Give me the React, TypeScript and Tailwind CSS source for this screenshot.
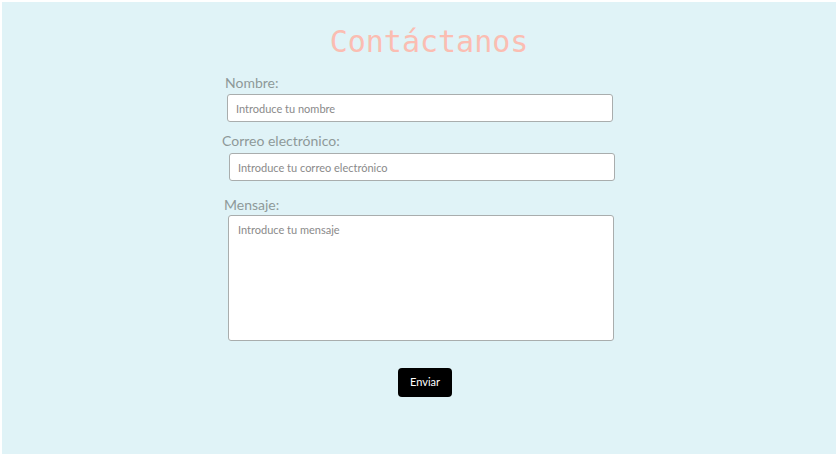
const App = () => {
  return (
    <div className="w-full h-[456px] bg-white p-[2px]">
      <div className="h-full bg-[#e0f3f7] pt-[22px] font-['Lato',sans-serif]">
        <h1 className="pl-[20px] text-center text-[30px] leading-[36px] text-[#fbbdb2] font-['DejaVu_Sans_Mono',monospace]">
          Contáctanos
        </h1>
        <form className="mx-auto w-[394px] flex flex-col" onSubmit={(e) => e.preventDefault()}>
          <label htmlFor="nombre" className="mt-[14px] pl-[3px] text-[14px] leading-[18px] text-[#8e9999]">
            Nombre:
          </label>
          <input
            id="nombre"
            type="text"
            placeholder="Introduce tu nombre"
            className="mt-[2px] ml-[5px] w-[386px] h-[28px] px-[8px] bg-white border border-[#a9adad] rounded-[3px] text-[11px] placeholder:text-[#8a8a8a] outline-none"
          />
          <label htmlFor="correo" className="mt-[10px] text-[14px] leading-[18px] text-[#8e9999]">
            Correo electrónico:
          </label>
          <input
            id="correo"
            type="email"
            placeholder="Introduce tu correo electrónico"
            className="mt-[3px] ml-[7px] w-[386px] h-[28px] px-[8px] bg-white border border-[#a9adad] rounded-[3px] text-[11px] placeholder:text-[#8a8a8a] outline-none"
          />
          <label htmlFor="mensaje" className="mt-[15px] pl-[2px] text-[14px] leading-[18px] text-[#8e9999]">
            Mensaje:
          </label>
          <textarea
            id="mensaje"
            placeholder="Introduce tu mensaje"
            className="mt-[1px] ml-[6px] w-[386px] h-[126px] px-[9px] py-[6px] bg-white border border-[#a9adad] rounded-[3px] text-[11px] placeholder:text-[#8a8a8a] outline-none resize-none"
          />
          <div className="flex justify-center mt-[27px]">
            <button type="submit" className="ml-[12px] w-[54px] h-[29px] bg-black text-white text-[11px] rounded-[4px]">
              Enviar
            </button>
          </div>
        </form>
      </div>
    </div>
  );
};

export default App;
